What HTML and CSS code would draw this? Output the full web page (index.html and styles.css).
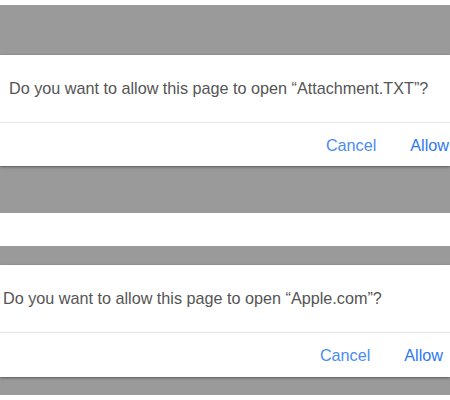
FILE: index.html
```html
<html>
	<head>
		<title>Allow page to open</title>
		<link rel="stylesheet" href="styles.css">
	</head>
	<body>
		<div class="gap gap-top"></div>
		<div class="band band-a"></div>

		<div class="dialog dialog-one">
			<div class="message">Do you want to allow this page to open “Attachment.TXT”?</div>
			<div class="buttons">
				<span class="btn cancel">Cancel</span>
				<span class="btn allow">Allow</span>
			</div>
		</div>

		<div class="band band-b"></div>
		<div class="gap gap-mid"></div>
		<div class="band band-c"></div>

		<div class="dialog dialog-two">
			<div class="message">Do you want to allow this page to open “Apple.com”?</div>
			<div class="buttons">
				<span class="btn cancel">Cancel</span>
				<span class="btn allow">Allow</span>
			</div>
		</div>

		<div class="band band-d"></div>
	</body>
</html>
```

FILE: styles.css
```css
body { margin:0; background:#fff; font-family:"Liberation Sans", Arial, sans-serif; overflow:hidden; }

.gap { background:#fff; }
.gap-top { height:5px; }
.gap-mid { height:33px; }

.band { background:#9a9a9a; }
.band-a { height:50px; }
.band-b { height:46px; border-top:1px solid #8a8a8a; }
.band-c { height:19px; }
.band-d { height:17px; border-top:1px solid #8a8a8a; }

.dialog {
	background:#fff;
	box-shadow:0 1px 3px rgba(0,0,0,.35);
	position:relative;
}

.message {
	height:67px;
	display:flex;
	align-items:center;
	font-size:16.2px;
	color:#555;
	border-bottom:1px solid #e6e6e6;
	white-space:nowrap;
}

.buttons {
	height:44px;
	display:flex;
	align-items:center;
	justify-content:flex-end;
	gap:34px;
	font-size:16.2px;
}

.btn { color:#4a8cf4; }
.allow { color:#2f78f2; }

.dialog-one .message { padding-left:9px; }
.dialog-one .buttons { padding-right:1px; }
.dialog-one { height:111px; }

.dialog-two .message { padding-left:3px; }
.dialog-two .buttons { padding-right:7px; }
.dialog-two { height:112px; }
```
